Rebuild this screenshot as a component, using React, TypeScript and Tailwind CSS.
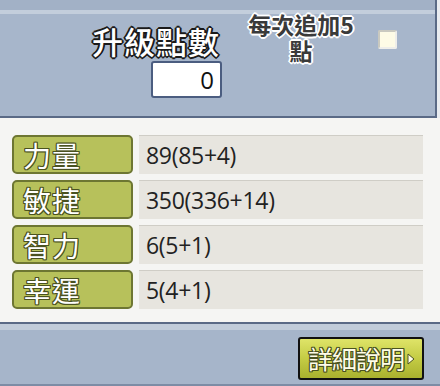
import React from "react";

const outlineDark =
  "[text-shadow:-1px_-1px_0_#1a1a1a,1px_-1px_0_#1a1a1a,-1px_1px_0_#1a1a1a,1px_1px_0_#1a1a1a,0_2px_0_#1a1a1a,0_-2px_0_#1a1a1a,2px_0_0_#1a1a1a,-2px_0_0_#1a1a1a]";
const outlineLight =
  "[text-shadow:-1px_-1px_0_#fff,1px_-1px_0_#fff,-1px_1px_0_#fff,1px_1px_0_#fff,0_2px_0_#fff,0_-2px_0_#fff,2px_0_0_#fff,-2px_0_0_#fff]";
const outlineOlive =
  "[text-shadow:-1px_-1px_0_#4a5220,1px_-1px_0_#4a5220,-1px_1px_0_#4a5220,1px_1px_0_#4a5220,0_1px_0_#4a5220,0_-1px_0_#4a5220,1px_0_0_#4a5220,-1px_0_0_#4a5220]";

const rows = [
  { label: "力量", value: "89(85+4)" },
  { label: "敏捷", value: "350(336+14)" },
  { label: "智力", value: "6(5+1)" },
  { label: "幸運", value: "5(4+1)" },
];

export default function App() {
  return (
    <div
      className="w-[440px] h-[386px] overflow-hidden bg-[#e9ecf0] flex flex-col"
      style={{ fontFamily: '"Noto Sans CJK TC", "Noto Sans", sans-serif' }}
    >
      {/* Top section */}
      <div className="w-[437px] h-[118px] shrink-0 bg-[#a7b6cb] border-r-2 border-b-2 border-[#5a6a86] flex flex-col">
        <div className="h-[10px] bg-[#a2b1c6]" />
        <div className="h-[4px] bg-[#c3cedc]" />
        <div className="flex flex-1">
          <div className="w-[222px] flex flex-col items-end pt-[9px]">
            <div
              className={`text-[31px] leading-[36px] text-white font-medium tracking-[1px] pr-[2px] ${outlineDark}`}
            >
              升級點數
            </div>
            <div
              className="mt-[2px] w-[71px] h-[37px] bg-white border-2 border-[#4b5d80] rounded-[3px] flex items-center justify-end pr-[6px] text-[24px] text-[#111]"
              style={{ fontFamily: '"Open Sans", sans-serif' }}
            >
              0
            </div>
          </div>
          <div
            className={`ml-[22px] w-[114px] -mt-[3px] flex flex-col items-center text-[23px] leading-[26px] font-bold text-[#3a3a3a] ${outlineLight}`}
          >
            <span className="block h-[26px]">每次追加5</span>
            <span className="block h-[26px]">點</span>
          </div>
          <div className="ml-[20px] mt-[16px] w-[19px] h-[19px] bg-[#fdfbe6] border-2 border-t-[#c9c9c0] border-l-[#c9c9c0] border-r-[#eeeeea] border-b-[#eeeeea] rounded-[2px]" />
        </div>
      </div>

      {/* Middle section */}
      <div className="flex-1 bg-[#f5f5f3] flex flex-col gap-[6px] pt-[17px] pl-[12px] pr-[17px]">
        {rows.map((r) => (
          <div key={r.label} className="flex h-[39px] gap-[6px]">
            <div className="w-[121px] h-full rounded-[5px] border-2 border-[#6d7632] bg-[#b7c15b] flex items-center pl-[9px]">
              <span
                className={`text-[28px] leading-none text-white tracking-[1px] ${outlineOlive}`}
              >
                {r.label}
              </span>
            </div>
            <div
              className="flex-1 h-full bg-[#e7e5df] border-t border-[#cfcdc6] flex items-center pl-[7px] text-[23px] text-[#222] tracking-[-0.3px]"
              style={{ fontFamily: '"Open Sans", sans-serif' }}
            >
              {r.value}
            </div>
          </div>
        ))}
      </div>

      {/* Bottom section */}
      <div className="h-[64px] shrink-0 border-t-2 border-[#5a6a86] bg-[#a6b5ca] flex flex-col">
        <div className="h-[6px] bg-[#c1ccda]" />
        <div className="flex flex-1 justify-end pr-[16px] pt-[7px]">
          <div className="w-[126px] h-[43px] border-2 border-[#111] rounded-[3px] bg-gradient-to-b from-[#dfe468] via-[#c4cc44] to-[#a9b12e] flex items-center pl-[8px] gap-[2px]">
            <span
              className={`text-[25px] leading-none text-[#fffde8] tracking-[-1px] ${outlineOlive}`}
            >
              詳細說明
            </span>
            <svg width="10" height="14" viewBox="0 0 10 14">
              <path d="M2 2 L8 7 L2 12 Z" fill="#fffde8" stroke="#4a5220" strokeWidth="1" />
            </svg>
          </div>
        </div>
        <div className="h-[2px] bg-[#7d8ca5]" />
      </div>
    </div>
  );
}
